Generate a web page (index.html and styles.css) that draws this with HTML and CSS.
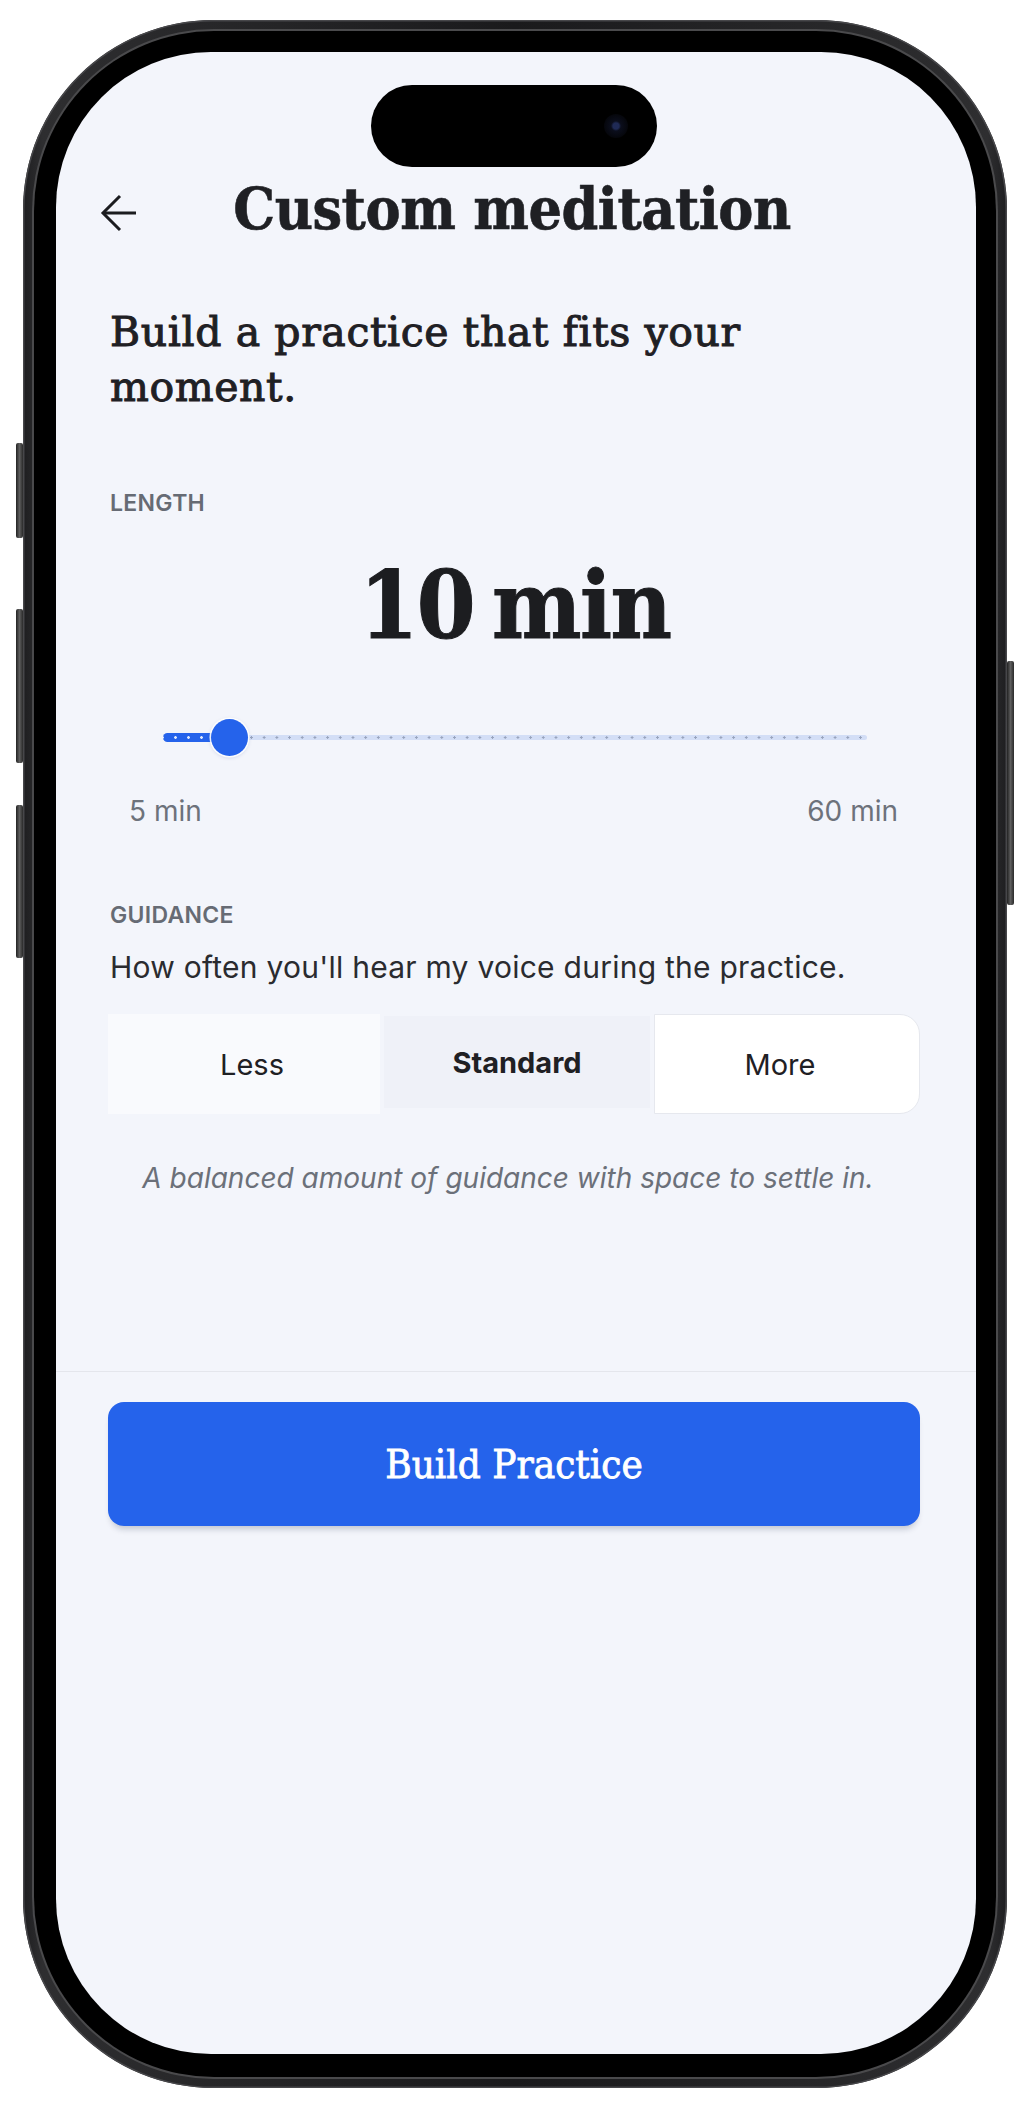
FILE: index.html
```html
<!DOCTYPE html>
<html lang="en">
<head>
<meta charset="utf-8">
<title>Custom meditation</title>
<link rel="stylesheet" href="styles.css">
</head>
<body>
<div class="phone">
  <span class="side-btn left b1"></span>
  <span class="side-btn left b2"></span>
  <span class="side-btn left b3"></span>
  <span class="side-btn right b4"></span>
  <div class="bezel">
    <div class="screen">
      <div class="island"><span class="camera"></span></div>

      <header class="topbar">
        <button class="back" aria-label="Back">
          <svg width="36" height="38" viewBox="0 0 36 38" fill="none" stroke="#1b1c1f" stroke-width="3" stroke-linejoin="miter">
            <path d="M3 19H36"/>
            <path d="M20 2L3 19L20 36"/>
          </svg>
        </button>
        <h1 class="title">Custom meditation</h1>
        <span class="spacer"></span>
      </header>

      <main class="content">
        <h2 class="subtitle">Build a practice that fits your moment.</h2>

        <section class="length">
          <div class="label">LENGTH</div>
          <div class="value">10 min</div>
          <div class="slider">
            <div class="track">
              <div class="fill" style="width: 9.09%"></div>
              <div class="knob" style="left: 9.09%"></div>
            </div>
          </div>
          <div class="range-labels">
            <span>5 min</span>
            <span>60 min</span>
          </div>
        </section>

        <section class="guidance">
          <div class="label">GUIDANCE</div>
          <p class="desc">How often you'll hear my voice during the practice.</p>
          <div class="segments">
            <button class="seg seg-less">Less</button>
            <button class="seg seg-standard">Standard</button>
            <button class="seg seg-more">More</button>
          </div>
          <p class="note">A balanced amount of guidance with space to settle in.</p>
        </section>
      </main>

      <footer class="footer">
        <button class="build">Build Practice</button>
      </footer>
    </div>
  </div>
</div>
</body>
</html>
```

FILE: styles.css
```css
* { box-sizing: border-box; }

html, body {
  margin: 0;
  padding: 0;
  background: #ffffff;
}

body {
  width: 1030px;
  height: 2108px;
  overflow: hidden;
  font-family: "Inter", "Liberation Sans", sans-serif;
  color: #1f2024;
}

.phone {
  position: relative;
  margin: 20px 0 0 23px;
  width: 984px;
  height: 2068px;
  padding: 11px;
  border-radius: 190px;
  background: linear-gradient(90deg, #1e1e20 0%, #2e2e30 2%, #1a1a1c 50%, #2e2e30 98%, #1e1e20 100%);
  box-shadow: inset 0 0 0 1.5px #47474a;
}

.side-btn {
  position: absolute;
  width: 7px;
  background: linear-gradient(90deg, #222, #5e5e5e 50%, #2a2a2a);
  border-radius: 2px;
}
.side-btn.left { left: -7px; }
.side-btn.right { right: -7px; }
.b1 { top: 423px; height: 95px; }
.b2 { top: 589px; height: 154px; }
.b3 { top: 785px; height: 153px; }
.b4 { top: 641px; height: 244px; }

.bezel {
  height: 100%;
  padding: 21px 20px 23px 22px;
  border-radius: 180px;
  background: #000;
  box-shadow: 0 0 0 2px #4a4a4c;
}

.screen {
  position: relative;
  height: 100%;
  border-radius: 155px;
  overflow: hidden;
  background: #f3f5fb;
  display: flex;
  flex-direction: column;
}

.island {
  position: absolute;
  top: 33px;
  left: 315px;
  width: 286px;
  height: 82px;
  border-radius: 41px;
  background: #000;
}
.camera {
  position: absolute;
  top: 29px;
  left: 233px;
  width: 24px;
  height: 24px;
  border-radius: 50%;
  background: radial-gradient(circle at 50% 50%, #1f2a55 0 3px, #0b0e1c 5px, #05060b 12px);
}

.topbar {
  margin-top: 117px;
  height: 80px;
  padding: 0 44px;
  display: flex;
  align-items: center;
}
.back {
  width: 36px;
  height: 38px;
  margin-top: 8px;
  padding: 0;
  border: 0;
  background: none;
  display: flex;
}
.spacer { width: 44px; }
.title {
  flex: 1;
  margin: 0;
  text-align: center;
  font-family: "DejaVu Serif Condensed", "DejaVu Serif", serif;
  font-stretch: condensed;
  font-weight: 700;
  font-size: 58.5px;
  line-height: 80px;
  letter-spacing: -0.45px;
  -webkit-text-stroke: 0.6px #1f2024;
  color: #1f2024;
}

.content {
  padding: 0 56px 0 54px;
}

.subtitle {
  margin: 56px 0 0;
  width: 720px;
  font-family: "DejaVu Serif", serif;
  font-weight: 400;
  font-size: 41px;
  line-height: 55px;
  letter-spacing: 0.6px;
  -webkit-text-stroke: 1px #1f2024;
  color: #1f2024;
}

.label {
  font-family: "Inter", "Liberation Sans", sans-serif;
  font-weight: 600;
  font-size: 23px;
  line-height: 26px;
  letter-spacing: 0.3px;
  color: #666b74;
}

.length .label { margin-top: 75px; }

.value {
  margin-top: 39px;
  text-align: center;
  font-family: "DejaVu Serif Condensed", "DejaVu Serif", serif;
  font-stretch: condensed;
  font-weight: 700;
  font-size: 94px;
  line-height: 100px;
  letter-spacing: -1.5px;
  word-spacing: -10px;
  -webkit-text-stroke: 1px #1c1d20;
  color: #1c1d20;
}

.slider {
  margin: 62px 53px 0 53px;
  height: 40px;
  display: flex;
  align-items: center;
}
.track {
  position: relative;
  width: 100%;
  height: 5px;
  border-radius: 3px;
  background:
    radial-gradient(circle, #97a3bd 0 1px, transparent 1.4px) 6px 50% / 12.7px 5px repeat-x,
    #d3def6;
}
.fill {
  position: absolute;
  left: 0;
  top: -2px;
  height: 9px;
  border-radius: 5px 0 0 5px;
  background:
    radial-gradient(circle, rgba(255,255,255,0.85) 0 1.1px, transparent 1.6px) 6px 50% / 13px 9px repeat-x,
    #2563eb;
}
.knob {
  position: absolute;
  top: 50%;
  width: 37px;
  height: 37px;
  margin: -18.5px 0 0 -16px;
  border-radius: 50%;
  background: #2563eb;
  box-shadow: 0 0 0 1.5px rgba(255,255,255,0.9), 0 1px 4px rgba(30,60,140,0.25);
}

.range-labels {
  margin-top: 38px;
  padding: 0 22px 0 19px;
  display: flex;
  justify-content: space-between;
  font-size: 28px;
  line-height: 32px;
  color: #6d727b;
}

.guidance .label { margin-top: 75px; }

.desc {
  margin: 21px 0 0;
  font-size: 30px;
  line-height: 36px;
  letter-spacing: 0.25px;
  color: #2a2b2f;
}

.segments {
  margin: 29px 0 0 -2px;
  height: 100px;
  display: grid;
  grid-template-columns: 272px 266px 1fr;
  column-gap: 4px;
}
.seg {
  border: 0;
  padding: 0;
  font-family: "Inter", "Liberation Sans", sans-serif;
  font-size: 29px;
  color: #1f2024;
  background: none;
}
.seg-less {
  padding-left: 16px;
  background: #f9fafd;
}
.seg-standard {
  margin: 2px 0 6px;
  background: #eff1f8;
  font-weight: 700;
}
.seg-more {
  padding-right: 14px;
  background: #ffffff;
  border: 1.5px solid #e6e8ee;
  border-radius: 0 20px 20px 0;
}

.note {
  margin: 48px 0 0;
  padding-right: 14px;
  text-align: center;
  font-style: italic;
  font-size: 28px;
  line-height: 32px;
  color: #6b7079;
}

.footer {
  margin-top: 177px;
  padding: 30px 56px 0 52px;
  border-top: 1.5px solid #e4e6ec;
}
.build {
  display: block;
  width: 100%;
  height: 124px;
  border: 0;
  border-radius: 16px;
  background: #2563eb;
  color: #ffffff;
  font-family: "DejaVu Serif Condensed", "DejaVu Serif", serif;
  font-stretch: condensed;
  font-weight: 400;
  font-size: 40px;
  -webkit-text-stroke: 0.8px #ffffff;
  box-shadow: 0 6px 6px -3px rgba(20,30,60,0.22);
}
```
